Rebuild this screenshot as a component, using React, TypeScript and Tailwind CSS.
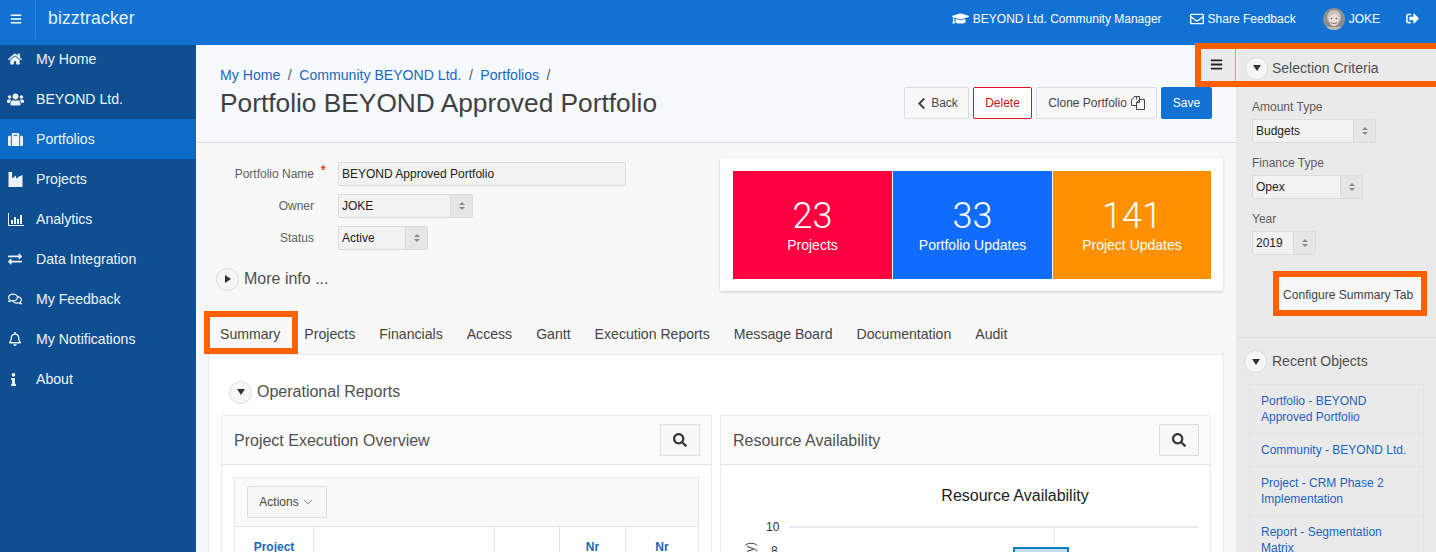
import React from "react";
import { FaHome, FaUsers, FaSuitcase, FaExchangeAlt, FaRegComments, FaRegBell, FaInfo, FaBars, FaGraduationCap, FaRegEnvelope, FaSignOutAlt, FaChevronLeft, FaSearch } from "react-icons/fa";
import { ChevronDown } from "lucide-react";

function IndustryIcon({ size = 15 }: { size?: number }) {
  return (
    <svg viewBox="0 0 14 15" width={size} height={size} fill="currentColor">
      <path d="M0 0h3.6v6.2L7.6 3.4v3.4l3-2.4L14 3v12H0z" />
    </svg>
  );
}

function ChartIcon({ size = 16 }: { size?: number }) {
  return (
    <svg viewBox="0 0 16 13" width={size} height={(size * 13) / 16} fill="currentColor">
      <path d="M0 0h1v12h15v1H0z" />
      <rect x="3" y="7" width="2" height="4" />
      <rect x="6" y="4" width="2" height="7" />
      <rect x="9" y="6" width="2" height="5" />
      <rect x="12" y="2" width="2" height="9" />
    </svg>
  );
}

function CloneIcon() {
  return (
    <svg viewBox="0 0 14 14" width={14} height={14} fill="none" stroke="currentColor" strokeWidth="1">
      <path d="M5.5 3.5V.5h3v3M5 9.5H.5V4L3.5.5h2" />
      <path d="M5.5 13.5V6.5L8.5 3.5h5v10z" />
      <path d="M5.5 6.5h3v-3" />
    </svg>
  );
}

const nav = [
  { label: "My Home", icon: <FaHome size={14} /> },
  { label: "BEYOND Ltd.", icon: <FaUsers size={17} className="-ml-[1px]" /> },
  { label: "Portfolios", icon: <FaSuitcase size={15} />, active: true },
  { label: "Projects", icon: <IndustryIcon /> },
  { label: "Analytics", icon: <ChartIcon /> },
  { label: "Data Integration", icon: <FaExchangeAlt size={14} /> },
  { label: "My Feedback", icon: <FaRegComments size={14} /> },
  { label: "My Notifications", icon: <FaRegBell size={14} /> },
  { label: "About", icon: <FaInfo size={13} className="-ml-[1px]" /> },
];

function Select({ value, width }: { value: string; width: string }) {
  return (
    <div className={`flex h-[24px] ${width} rounded-[2px] border border-[#dcdcdc] bg-[#f2f2f2] text-[12px] text-[#222]`}>
      <span className="flex-1 pl-[3px] leading-[22px]">{value}</span>
      <span className="flex w-[22px] flex-col items-center justify-center gap-[2px] border-l border-[#dcdcdc] bg-[#e6e6e6]">
        <span className="h-0 w-0 border-x-[3px] border-b-[3px] border-x-transparent border-b-[#8a8a8a]" />
        <span className="h-0 w-0 border-x-[3px] border-t-[3px] border-x-transparent border-t-[#8a8a8a]" />
      </span>
    </div>
  );
}

function Circle({ open }: { open?: boolean }) {
  return (
    <span className="flex h-[23px] w-[23px] shrink-0 items-center justify-center rounded-full border border-[#dcdcdc] bg-[#f7f7f7]">
      {open ? (
        <span className="h-0 w-0 border-x-[4.5px] border-t-[6px] border-x-transparent border-t-[#333]" />
      ) : (
        <span className="ml-[1px] h-0 w-0 border-y-[4.5px] border-l-[6px] border-y-transparent border-l-[#333]" />
      )}
    </span>
  );
}

function Field({ label, star, children }: { label: string; star?: boolean; children: React.ReactNode }) {
  return (
    <div className="flex items-center">
      <div className="relative w-[98px] text-right text-[12px] text-[#606060]">
        {label}
        {star && <span className="absolute right-[-12px] top-[-5px] text-[14px] text-[#ff0000]">*</span>}
      </div>
      <div className="ml-[24px]">{children}</div>
    </div>
  );
}

function Tile({ n, label, bg, width }: { n: string; label: string; bg: string; width: string }) {
  return (
    <div className={`flex h-[108px] flex-col items-center pt-[25px] text-white ${width} ${bg}`}>
      <span className="font-['Roboto'] text-[36px] font-light leading-[40px]">{n}</span>
      <span className="text-[14px] leading-[18px]">{label}</span>
    </div>
  );
}

function CardHeader({ title }: { title: string }) {
  return (
    <div className="flex h-[49px] items-center justify-between border-b border-[#e4e4e4] bg-[#fbfbfb] pl-[12px] pr-[11px]">
      <span className="pt-[1px] text-[16px] text-[#505050]">{title}</span>
      <span className="flex h-[32px] w-[40px] items-center justify-center rounded-[2px] border border-[#dcdcdc] bg-[#f8f8f8] text-[#383838]">
        <FaSearch size={14} />
      </span>
    </div>
  );
}

export default function App() {
  return (
    <div className="relative flex h-[552px] w-[1436px] flex-col overflow-hidden bg-[#f8f8f8] font-['Liberation_Sans',sans-serif]">
      {/* top bar */}
      <header className="flex h-[45px] shrink-0 items-center bg-[#1272d3] pb-[8px] text-white">
        <div className="flex h-[39px] w-[36px] items-center justify-start self-start border-r border-[#2a80d6] pb-[2px] pl-[10px]">
          <FaBars size={12} />
        </div>
        <span className="ml-[12px] text-[17.5px] tracking-[0.2px] text-[#e8f2fb]">bizztracker</span>
        <div className="ml-auto flex items-center text-[12px]">
          <FaGraduationCap size={17} />
          <span className="ml-[4px]">BEYOND Ltd. Community Manager</span>
          <FaRegEnvelope size={14} className="ml-[28px]" />
          <span className="ml-[4px]">Share Feedback</span>
          <svg viewBox="0 0 22 22" className="ml-[27px] h-[22px] w-[22px] rounded-full">
            <rect width="22" height="22" fill="#8d8d8d" />
            <ellipse cx="11" cy="9" rx="7" ry="7" fill="#c9c4bf" />
            <ellipse cx="11" cy="12" rx="5" ry="6" fill="#e6dcd3" />
            <path d="M7.5 14c1.5 2 5.5 2 7 0" stroke="#777" strokeWidth="1" fill="none" />
            <circle cx="8.5" cy="10.5" r="0.8" fill="#555" />
            <circle cx="13.5" cy="10.5" r="0.8" fill="#555" />
            <rect y="19" width="22" height="3" fill="#bbb" />
          </svg>
          <span className="ml-[4px]">JOKE</span>
          <FaSignOutAlt size={13} className="ml-[26px] mr-[17px]" />
        </div>
      </header>

      <div className="flex min-h-0 flex-1">
        {/* sidebar */}
        <nav className="w-[196px] shrink-0 bg-[#0d4f91] text-[14.1px] leading-[20px] text-[#eef4fa]">
          {nav.map(({ label, icon, active }, i) => (
            <div
              key={label}
              className={`flex items-center ${i === 0 ? "h-[34px] pb-[6px]" : "h-[40px]"} ${active ? "bg-[#0e6ac7]" : ""}`}
            >
              <span className="flex w-[36px] justify-start pl-[8px]">{icon}</span>
              <span>{label}</span>
            </div>
          ))}
        </nav>

        {/* main */}
        <main className="flex min-w-0 flex-1 flex-col">
          <div className="relative flex h-[98px] shrink-0 justify-between border-b border-[#d8dde2] bg-[#f6f9fe] pl-[24px] pr-[24px]">
            <div className="pt-[21px]">
              <div className="flex text-[14.1px] leading-[18px] text-[#1a68bd]">
                <span>My Home</span>
                <span className="mx-[7.5px] text-[#555]">/</span>
                <span>Community BEYOND Ltd.</span>
                <span className="mx-[7.5px] text-[#555]">/</span>
                <span>Portfolios</span>
                <span className="mx-[7.5px] text-[#555]">/</span>
              </div>
              <h1 className="mt-[1px] text-[26.3px] leading-[36px] text-[#404040]">Portfolio BEYOND Approved Portfolio</h1>
            </div>
            <div className="mt-[42px] flex h-[32px] gap-[4px] text-[12px]">
              <span className="flex w-[65px] items-center justify-center gap-[3px] rounded-[2px] border border-[#dcdcdc] bg-[#f8f8f8] text-[#444]">
                <FaChevronLeft size={13} /> Back
              </span>
              <span className="flex w-[59px] items-center justify-center rounded-[2px] border border-[#e0101c] bg-white text-[#c0161e]">Delete</span>
              <span className="flex w-[121px] items-center justify-center gap-[4px] rounded-[2px] border border-[#dcdcdc] bg-[#f8f8f8] text-[#444]">
                Clone Portfolio <CloneIcon />
              </span>
              <span className="flex w-[51px] items-center justify-center rounded-[2px] bg-[#1272d3] text-white">Save</span>
            </div>
            <div className="absolute right-[1px] top-[4px] flex h-[32px] w-[34px] items-center justify-center bg-[#eaeaea] pb-[2px] pr-[4px] text-[#222]">
              <FaBars size={13} />
            </div>
            <div className="absolute right-0 top-[4px] h-[32px] w-[1px] bg-[#7fb0e0]" />
          </div>

          <div className="flex shrink-0 justify-between pl-[20px] pr-[13px] pt-[15px]">
            <div className="w-[440px] pt-[4px]">
              <div className="flex flex-col gap-[8px]">
                <Field label="Portfolio Name" star>
                  <div className="h-[24px] w-[288px] rounded-[2px] border border-[#dcdcdc] bg-[#f2f2f2] pl-[3px] text-[12px] leading-[22px] text-[#222]">BEYOND Approved Portfolio</div>
                </Field>
                <Field label="Owner"><Select value="JOKE" width="w-[135px]" /></Field>
                <Field label="Status"><Select value="Active" width="w-[90px]" /></Field>
              </div>
              <div className="mt-[17px] flex items-center gap-[5px] text-[16px] text-[#505050]">
                <Circle />
                <span>More info ...</span>
              </div>
            </div>
            <div className="flex h-[133px] w-[503px] rounded-[2px] bg-white p-[13px] pr-[12px] shadow-[0_1px_3px_rgba(0,0,0,0.18)]">
              <div className="flex flex-1 gap-[1px]">
                <Tile n="23" label="Projects" bg="bg-[#ff0040]" width="w-[159px]" />
                <Tile n="33" label="Portfolio Updates" bg="bg-[#0f6cff]" width="w-[159px]" />
                <Tile n="141" label="Project Updates" bg="bg-[#ff9100]" width="flex-1" />
              </div>
            </div>
          </div>

          <div className="ml-[12px] mr-[12px] mt-[19px] flex h-[44px] shrink-0 items-end text-[14.1px] text-[#444]">
            {["Summary", "Projects", "Financials", "Access", "Gantt", "Execution Reports", "Message Board", "Documentation", "Audit"].map((t) => (
              <span key={t} className="flex h-[30px] items-center px-[12px] pb-[8px]">{t}</span>
            ))}
          </div>

          <div className="ml-[12px] mr-[12px] flex-1 border border-[#e8e8e8] bg-white px-[12px]">
            <div className="ml-[8px] mt-[25px] flex items-center gap-[5px] text-[16px] text-[#505050]">
              <Circle open />
              <span>Operational Reports</span>
            </div>
            <div className="mt-[11px] flex gap-[8px]">
              <section className="h-[200px] w-[491px] rounded-[2px] border border-[#ececec]">
                <CardHeader title="Project Execution Overview" />
                <div className="mx-[12px] mt-[12px] h-[100px] border border-[#e8e8e8]">
                  <div className="flex h-[49px] items-center border-b border-[#e4e4e4] bg-[#fafafa] pl-[12px]">
                    <span className="flex h-[32px] w-[80px] items-center justify-center gap-[2px] rounded-[2px] border border-[#dcdcdc] bg-[#f8f8f8] text-[12px] text-[#444]">
                      Actions <ChevronDown size={14} strokeWidth={1.25} />
                    </span>
                  </div>
                  <div className="flex h-[50px] text-center text-[12px] font-bold text-[#1a68bd]">
                    <div className="w-[79px] border-r border-[#e4e4e4] pt-[11px]">Project</div>
                    <div className="w-[181px] border-r border-[#e4e4e4]" />
                    <div className="w-[65px] border-r border-[#e4e4e4]" />
                    <div className="w-[66px] border-r border-[#e4e4e4] pt-[11px]">Nr</div>
                    <div className="flex-1 pt-[11px]">Nr</div>
                  </div>
                </div>
              </section>
              <section className="h-[200px] w-[491px] rounded-[2px] border border-[#ececec]">
                <CardHeader title="Resource Availability" />
                <div className="relative h-[100px]">
                  <div className="pl-[99px] pt-[20px] text-center text-[16px] leading-[22px] text-[#222]">Resource Availability</div>
                  <div className="absolute left-[45px] top-[54px] text-[12px] leading-[16px] text-[#333]">10</div>
                  <div className="absolute left-[68px] top-[61px] h-[2px] w-[409px] bg-[#e6e9f0]" />
                  <div className="absolute left-[333px] top-[61px] h-[40px] w-[1px] bg-[#e6e9f0]" />
                  <div className="absolute left-[292px] top-[82px] h-[30px] w-[56px] border-2 border-[#0a7fc0] bg-[#c5dfee]" />
                  <div className="absolute left-[50px] top-[78px] text-[12px] leading-[16px] text-[#333]">8</div>
                  <div className="absolute left-[22px] top-[76px] origin-center -rotate-90 text-[12px] leading-[16px] text-[#555]">(y)</div>
                </div>
              </section>
            </div>
          </div>
        </main>

        {/* right panel */}
        <aside className="w-[200px] shrink-0 bg-[#eaeaea]">
          <div className="flex h-[36px] items-center border-l border-[#f4f4f4] pl-[8px] pt-[10px] text-[14px] text-[#505050]">
            <Circle open />
            <span className="ml-[4px]">Selection Criteria</span>
          </div>
          <div className="border-b border-[#dedede] pb-[27px] pl-[16px] pt-[18px] text-[12px] text-[#5c5c5c]">
            <div className="leading-[16px]">Amount Type</div>
            <div className="mt-[4px]"><Select value="Budgets" width="w-[124px]" /></div>
            <div className="mt-[12px] leading-[16px]">Finance Type</div>
            <div className="mt-[4px]"><Select value="Opex" width="w-[111px]" /></div>
            <div className="mt-[12px] leading-[16px]">Year</div>
            <div className="mt-[4px]"><Select value="2019" width="w-[64px]" /></div>
            <div className="ml-[27px] mt-[22px] flex h-[33px] w-[142px] items-center bg-[#f7f7f7] pl-[4px] pt-[3px] text-[12.1px] text-[#444]">Configure Summary Tab</div>
          </div>
          <div className="flex items-center gap-[5px] pl-[8px] pt-[12px] text-[14px] text-[#505050]">
            <Circle open />
            <span>Recent Objects</span>
          </div>
          <ul className="ml-[13px] mt-[11px] w-[175px] border border-[#e4e4e4] text-[12px] leading-[16px] text-[#1c62c9]">
            <li className="border-b border-[#e4e4e4] px-[11px] py-[8px]">Portfolio - BEYOND Approved Portfolio</li>
            <li className="border-b border-[#e4e4e4] px-[11px] py-[8px]">Community - BEYOND Ltd.</li>
            <li className="border-b border-[#e4e4e4] px-[11px] py-[8px]">Project - CRM Phase 2 Implementation</li>
            <li className="px-[11px] py-[8px]">Report - Segmentation Matrix</li>
          </ul>
        </aside>
      </div>

      {/* annotation boxes */}
      <div className="absolute left-[1195px] top-[43px] h-[44px] w-[241px] border-[6px] border-r-0 border-[#ff6000]" />
      <div className="absolute left-[1273px] top-[271px] h-[45px] w-[154px] border-[6px] border-[#ff6000]" />
      <div className="absolute left-[204px] top-[311px] h-[43px] w-[94px] border-[6px] border-[#ff6000]" />
    </div>
  );
}
